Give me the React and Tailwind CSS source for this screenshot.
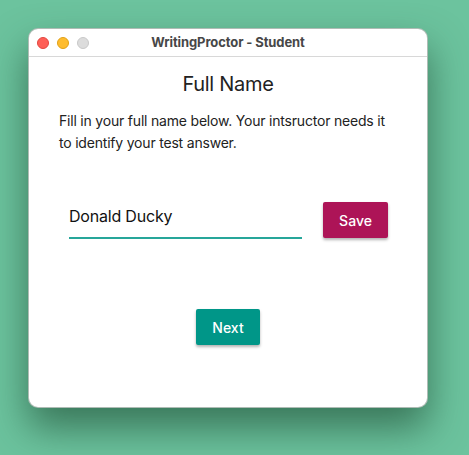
export default function App() {
  return (
    <div className="w-[469px] h-[455px] bg-[#6cc39e] pt-[28px] pl-[28px] font-['Inter',sans-serif]">
      <div className="w-[400px] h-[380px] bg-white rounded-[10px] shadow-[0_20px_38px_rgba(35,85,60,0.7)] border border-[#5f7a6c]/50 overflow-hidden flex flex-col">
        <div className="h-[28px] shrink-0 relative flex items-center justify-center border-b border-[#d8d8d8]">
          <div className="absolute left-[8px] top-[8px] flex gap-[8px]">
            <span className="w-[12px] h-[12px] rounded-full bg-[#fe5f57] border border-[#e2463f]" />
            <span className="w-[12px] h-[12px] rounded-full bg-[#febc2e] border border-[#e1a116]" />
            <span className="w-[12px] h-[12px] rounded-full bg-[#dcdcdc] border border-[#c8c8c8]" />
          </div>
          <span className="text-[13px] font-bold text-[#474747] tracking-[-0.1px]">WritingProctor - Student</span>
        </div>

        <div className="flex flex-col pt-[13px]">
          <h1 className="text-[20px] leading-[28px] text-[#222] text-center tracking-[-0.3px]">Full Name</h1>
          <p className="mt-[12px] px-[30px] text-[14px] leading-[22px] text-[#222] tracking-[-0.2px]">
            Fill in your full name below. Your intsructor needs it to identify your test answer.
          </p>

          <div className="mt-[49px] flex items-start pl-[40px] pr-[39px]">
            <div className="w-[233px] h-[36px] border-b-2 border-[#26a69a] flex items-center">
              <input
                defaultValue="Donald Ducky"
                className="w-full text-[16px] text-[#111] outline-none bg-transparent mt-[-9px] tracking-[-0.2px]"
              />
            </div>
            <button className="ml-auto mt-[-1px] w-[65px] h-[36px] rounded-[2px] bg-[#ad1457] text-white text-[14px] font-medium shadow-[0_2px_3px_rgba(0,0,0,0.3)]">
              Save
            </button>
          </div>

          <div className="mt-[70px] flex justify-center">
            <button className="w-[64px] h-[36px] rounded-[2px] bg-[#009688] text-white text-[14px] font-medium shadow-[0_2px_3px_rgba(0,0,0,0.3)]">
              Next
            </button>
          </div>
        </div>
      </div>
    </div>
  );
}
